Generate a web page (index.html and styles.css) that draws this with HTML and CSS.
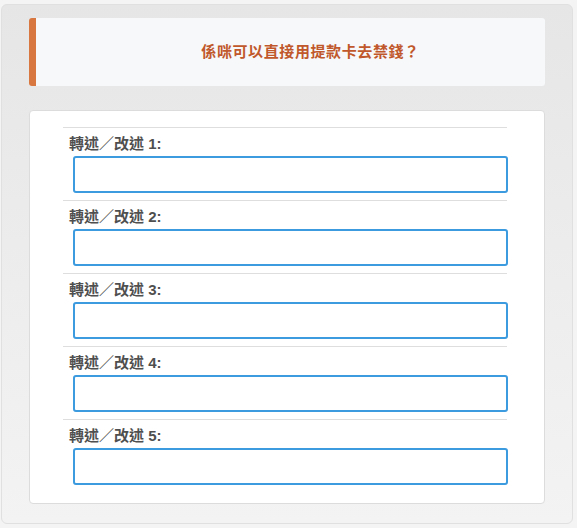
FILE: index.html
```html
<!DOCTYPE html>
<html lang="zh-Hant">
<head>
  <meta charset="UTF-8" />
  <meta name="viewport" content="width=device-width, initial-scale=1.0" />
  <title>轉述／改述</title>
  <link rel="stylesheet" href="styles.css">
</head>
<body>
  <div class="panel">
    <div class="question">係咪可以直接用提款卡去禁錢？</div>

    <form class="card">
      <div class="field">
        <label for="r1">轉述／改述 1:</label>
        <input type="text" id="r1" />
      </div>
      <div class="field">
        <label for="r2">轉述／改述 2:</label>
        <input type="text" id="r2" />
      </div>
      <div class="field">
        <label for="r3">轉述／改述 3:</label>
        <input type="text" id="r3" />
      </div>
      <div class="field">
        <label for="r4">轉述／改述 4:</label>
        <input type="text" id="r4" />
      </div>
      <div class="field">
        <label for="r5">轉述／改述 5:</label>
        <input type="text" id="r5" />
      </div>
    </form>
  </div>
</body>
</html>
```

FILE: styles.css
```css
body { margin: 0; padding: 4px 4px 4px 1px; background: #f4f4f4; font-family: "Liberation Sans", "Noto Sans CJK TC", sans-serif; }
.panel { width: 572px; height: 520px; box-sizing: border-box; padding: 13px 27px 0 27px; background: linear-gradient(#e6e6e6, #f3f3f3); border: 1px solid #e0e0e0; border-radius: 6px; }
.question { height: 68px; box-sizing: border-box; padding: 0 0 4px 40px; display: flex; align-items: center; justify-content: center; background: #f7f8fa; border-left: 7px solid #d8773f; border-radius: 3px; color: #c0582c; font-size: 15px; font-weight: bold; letter-spacing: 0.6px; }
.card { margin-top: 24px; height: 394px; box-sizing: border-box; padding: 16px 37px 0 33px; background: #fff; border: 1px solid #dcdcdc; border-radius: 4px; }
.field { border-top: 1px solid #dedede; padding: 7px 0 7px 6px; }
.field label { display: block; font-size: 15px; line-height: 18px; font-weight: bold; color: #4f4f4f; }
.field input { display: block; width: 435px; height: 37px; box-sizing: border-box; margin: 3px 0 0 4px; border: 2px solid #3c9ade; border-radius: 3px; font-size: 14px; padding: 0 8px; outline: none; }
```
